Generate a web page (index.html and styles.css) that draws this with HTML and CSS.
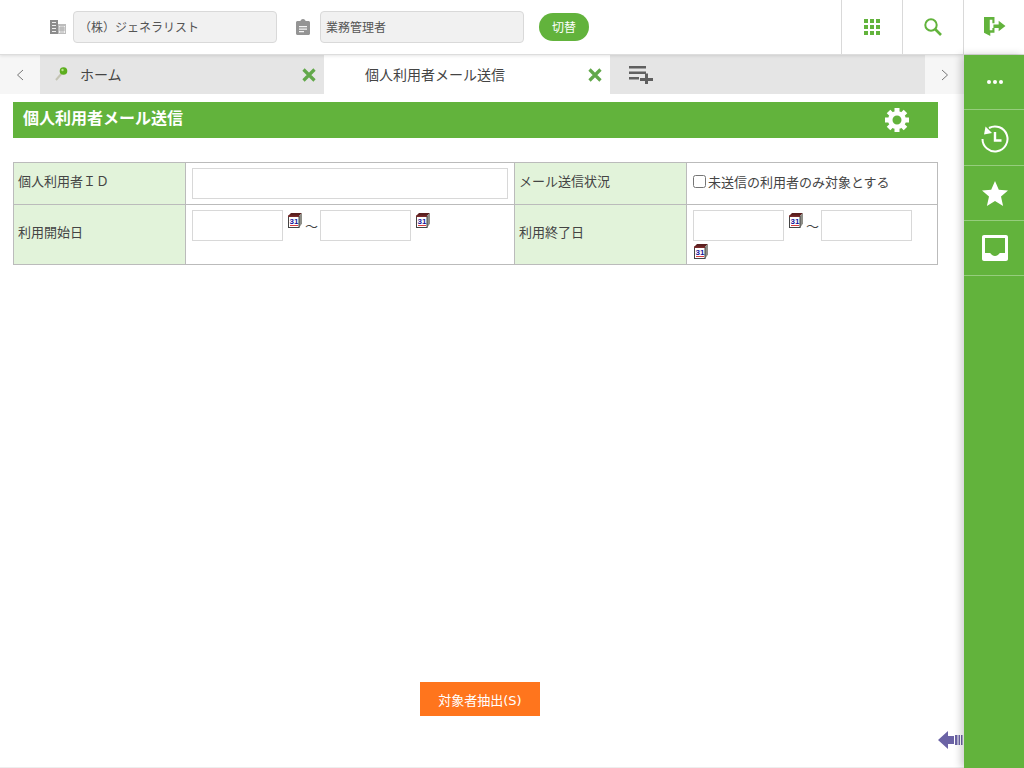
FILE: index.html
```html
<!DOCTYPE html>
<html lang="ja">
<head>
<meta charset="utf-8">
<title>個人利用者メール送信</title>
<link rel="stylesheet" href="styles.css">
</head>
<body>
<svg class="defs" width="0" height="0">
  <defs>
    <symbol id="cal" viewBox="0 0 14 15">
      <path d="M0 3 3 0h11l-3 3z" fill="#5a1f1f"/>
      <path d="M11 3l3-3v10.500L11 15z" fill="#8f8f88"/>
      <rect x=".5" y="3.500" width="10.500" height="11" fill="#fff" stroke="#444" stroke-width="1"/>
      <rect x="0" y="2.500" width="11" height="1.500" fill="#7a2a2a"/>
      <text x="1.500" y="10.500" class="cal-num">31</text>
      <rect x="2" y="12" width="8" height="1" fill="#d84040"/>
    </symbol>
  </defs>
</svg>
<header class="topbar">
  <div class="org">
    <svg class="org-icon" width="16" height="16" viewBox="0 0 16 16"><path d="M0 1h8v14H0z" fill="#8c8c8c"/><path d="M2 3h4v1H2zM2 6h4v1H2zM2 9h4v1H2zM2 12h4v1H2z" fill="#eee"/><path d="M8 5h8v10H8z" fill="#bdbdbd"/><path d="M9 7h6v7H9z" fill="#f0f0f0"/><path d="M9 9h6M9 11h6M11 7v7M13 7v7" stroke="#999" stroke-width=".7"/></svg>
    <div class="readonly name-co">（株）ジェネラリスト</div>
    <svg class="role-icon" width="14" height="16" viewBox="0 0 14 16"><path d="M1.500 2H4.500C4.500 1 5.500 0 7 0s2.500 1 2.500 2h3c.8 0 1.500.7 1.500 1.500v11c0 .8-.7 1.500-1.500 1.500h-11C.7 16 0 15.300 0 14.500v-11C0 2.700.7 2 1.500 2z" fill="#949494"/><path d="M3 7h8v1.200H3zM3 9.500h8v1.200H3zM3 12h5v1.200H3z" fill="#f4f4f4"/></svg>
    <div class="readonly name-role">業務管理者</div>
    <button class="switch" type="button">切替</button>
  </div>
  <nav class="top-actions">
    <div class="top-action">
      <svg width="16" height="16" viewBox="0 0 16 16" fill="#62b33c"><path d="M0 0h4v4H0zM6 0h4v4H6zM12 0h4v4h-4zM0 6h4v4H0zM6 6h4v4H6zM12 6h4v4h-4zM0 12h4v4H0zM6 12h4v4H6zM12 12h4v4h-4z"/></svg>
    </div>
    <div class="top-action">
      <svg width="18" height="18" viewBox="0 0 18 18" fill="none" stroke="#62b33c"><circle cx="7" cy="7" r="5.700" stroke-width="2"/><path d="M11 11l6 6" stroke-width="2.600"/></svg>
    </div>
    <div class="top-action top-action-last">
      <svg width="22" height="19" viewBox="0 0 21 18" fill="#62b33c"><path d="M0 0h10v6H8V2.500H5.500v10H8v-2h2V15H6v3l-6-3z"/><path d="M9 7h5V3.500l6.500 5-6.500 5V10.500H9z"/></svg>
    </div>
  </nav>
</header>
<div class="body-row">
  <main class="content">
    <div class="tabs">
      <div class="tab-arrow"><svg width="8" height="12" viewBox="0 0 8 12" fill="none" stroke="#777" stroke-width="1"><path d="M7 1 1.500 6 7 11"/></svg></div>
      <div class="tab tab-home">
        <svg class="pin" width="14" height="15" viewBox="0 0 14 15"><path d="M7 7 1 14" stroke="#c4c4b4" stroke-width="2"/><circle cx="8.500" cy="5" r="3.800" fill="#5cae1e"/><circle cx="7.500" cy="4" r="1.200" fill="#b6e08a"/></svg>
        <span class="tab-label">ホーム</span>
        <svg class="x" width="14" height="14" viewBox="0 0 14 14"><path d="M1.500 1.500l11 11M12.500 1.500l-11 11" stroke="#62a84a" stroke-width="3.200"/></svg>
      </div>
      <div class="tab tab-active">
        <span class="tab-label">個人利用者メール送信</span>
        <svg class="x" width="14" height="14" viewBox="0 0 14 14"><path d="M1.500 1.500l11 11M12.500 1.500l-11 11" stroke="#62a84a" stroke-width="3.200"/></svg>
      </div>
      <div class="tab-rest">
        <svg width="24" height="18" viewBox="0 0 24 18" fill="#5f5f5f"><path d="M0 0h17v2.500H0zM0 5.500h17V8H0zM0 11h10v2.500H0zM16 7.500h3V12h5v3h-5v3h-3v-3h-5v-3h5z"/></svg>
      </div>
      <div class="tab-arrow"><svg width="8" height="12" viewBox="0 0 8 12" fill="none" stroke="#777" stroke-width="1"><path d="M1 1 6.500 6 1 11"/></svg></div>
    </div>
    <section class="page">
      <div class="title-bar">
        <h1 class="title">個人利用者メール送信</h1>
        <svg class="gear" width="24" height="24" viewBox="-12 -12 24 24" fill="none" stroke="#fff">
          <circle r="6.800" stroke-width="4.600"/>
          <path d="M-12 0H12" stroke-width="5" stroke-dasharray="4 16 4"/>
          <path d="M-12 0H12" stroke-width="5" stroke-dasharray="4 16 4" transform="rotate(45)"/>
          <path d="M-12 0H12" stroke-width="5" stroke-dasharray="4 16 4" transform="rotate(90)"/>
          <path d="M-12 0H12" stroke-width="5" stroke-dasharray="4 16 4" transform="rotate(135)"/>
        </svg>
      </div>
      <table class="form">
        <colgroup><col class="c1"><col class="c2"><col class="c3"><col class="c4"></colgroup>
        <tr class="r1">
          <th>個人利用者ＩＤ</th>
          <td><input class="field field-wide" type="text"></td>
          <th>メール送信状況</th>
          <td><label class="check"><input type="checkbox">未送信の利用者のみ対象とする</label></td>
        </tr>
        <tr class="r2">
          <th>利用開始日</th>
          <td>
            <div class="range">
              <input class="field field-date" type="text"><svg class="cal"><use href="#cal"/></svg><span class="tilde">～</span><input class="field field-date" type="text"><svg class="cal"><use href="#cal"/></svg>
            </div>
          </td>
          <th>利用終了日</th>
          <td>
            <div class="range">
              <input class="field field-date" type="text"><svg class="cal"><use href="#cal"/></svg><span class="tilde">～</span><input class="field field-date" type="text"><svg class="cal"><use href="#cal"/></svg>
            </div>
          </td>
        </tr>
      </table>
      <div class="actions">
        <button class="extract" type="button">対象者抽出(S)</button>
      </div>
    </section>
    <svg class="collapse" width="25" height="20" viewBox="0 0 25 20" fill="#6b63a5"><path d="M0 10 10 1v5h6v8h-6v5z"/><path d="M17 5h2.500v10H17zM20.500 5h1.500v10h-1.500zM23 5h1.500v10H23z"/></svg>
  </main>
  <aside class="side">
    <div class="side-item">
      <svg width="16" height="4" viewBox="0 0 16 4" fill="#fff"><circle cx="2" cy="2" r="2"/><circle cx="8" cy="2" r="2"/><circle cx="14" cy="2" r="2"/></svg>
    </div>
    <div class="side-item side-item-tall">
      <svg width="28" height="28" viewBox="0 0 28 28" fill="none" stroke="#fff"><path d="M8 3A12.500 12.500 0 1 1 1.500 14" stroke-width="2"/><path d="M4.500 1.500 11 8 3 9.500z" fill="#fff" stroke="none"/><path d="M14 7v8.500h6.500" stroke-width="2.400"/></svg>
    </div>
    <div class="side-item">
      <svg width="26" height="25" viewBox="0 0 26 25" fill="#fff"><path d="M13 0l3.800 8.700 9.200.8-7 6.100 2.100 9.400-8.100-5-8.100 5 2.100-9.400-7-6.100 9.200-.8z"/></svg>
    </div>
    <div class="side-item">
      <svg width="26" height="26" viewBox="0 0 26 26"><path fill="#fff" fill-rule="evenodd" d="M2 0h22c1.100 0 2 .9 2 2v22c0 1.100-.9 2-2 2H2c-1.100 0-2-.9-2-2V2C0 .9.900 0 2 0zM3 3v15h5c1 0 1.500 3 5 3s4-3 5-3h5V3z"/></svg>
    </div>
  </aside>
</div>
</body>
</html>
```
FILE: styles.css
```css
* { box-sizing: border-box; }
html, body { margin: 0; height: 768px; overflow: hidden; }
body {
  display: flex;
  flex-direction: column;
  background: #fff;
  color: #444;
  font-family: "Noto Sans CJK JP", "Noto Sans", sans-serif;
  font-size: 13px;
}
.defs { position: absolute; }
.cal-num { font: bold 8px "Liberation Sans", sans-serif; fill: #16169a; }

.topbar {
  flex: none;
  height: 55px;
  display: flex;
  justify-content: space-between;
  border-bottom: 1px solid #ddd;
  box-shadow: 0 1px 3px rgba(0,0,0,.1);
  position: relative;
  z-index: 3;
}
.org {
  display: flex;
  align-items: center;
  padding-left: 50px;
}
.org-icon { margin-right: 7px; }
.readonly {
  width: 204px;
  height: 32px;
  line-height: 29px;
  background: #f1f1f1;
  border: 1px solid #d9d9d9;
  border-radius: 4px;
  color: #555;
  font-size: 12px;
}
.name-co { padding-left: 5px; }
.name-role { padding-left: 5px; }
.role-icon { margin: 0 10px 0 19px; }
.switch {
  margin-left: 15px;
  width: 50px;
  height: 28px;
  border: 0;
  border-radius: 14px;
  background: #62b33c;
  color: #fff;
  font: inherit;
  font-size: 12px;
  padding: 0 0 2px;
}
.top-actions { display: flex; }
.top-action {
  width: 61px;
  display: flex;
  align-items: center;
  justify-content: center;
  border-left: 1px solid #d9d9d9;
  padding-right: 1px;
}
.top-action-last { padding: 0 0 1px 1px; }

.body-row { flex: 1; display: flex; min-height: 0; }
.content {
  flex: 1;
  min-width: 0;
  position: relative;
  display: flex;
  flex-direction: column;
  border-bottom: 1px solid #eee;
}
.tabs { flex: none; height: 39px; display: flex; background: #e5e5e5; }
.tab-arrow {
  width: 40px;
  background: #f6f6f6;
  display: flex;
  align-items: center;
  justify-content: center;
}
.tab-arrow:last-child { width: 39px; }
.tab {
  display: flex;
  align-items: center;
  position: relative;
  font-size: 14px;
  padding-bottom: 2px;
}
.tab-home { width: 284px; padding-left: 15px; }
.pin { margin-right: 11px; }
.tab-active { width: 286px; background: #fff; padding-left: 41px; }
.x { position: absolute; right: 8px; top: 13px; }
.tab-rest { flex: 1; padding: 11px 0 0 19px; }

.page {
  flex: 1;
  display: flex;
  flex-direction: column;
  padding: 8px 26px 0 13px;
}
.title-bar {
  flex: none;
  height: 36px;
  background: #62b33c;
  display: flex;
  align-items: center;
  justify-content: space-between;
  padding: 0 29px 0 10px;
}
.title { margin: 0 0 7px; font-size: 16px; font-weight: 700; color: #fff; }
.form {
  margin-top: 24px;
  width: 924px;
  table-layout: fixed;
  border-collapse: collapse;
  font-size: 13px;
}
.c1, .c3 { width: 172px; }
.c2 { width: 329px; }
.c4 { width: 251px; }
.form th, .form td { border: 1px solid #bbb; padding: 5px 6px 0; vertical-align: top; }
.form th {
  background: #e2f3da;
  font-weight: 400;
  text-align: left;
  vertical-align: middle;
  padding: 0 4px 7px;
}
.r1 { height: 42px; }
.r2 { height: 60px; }
.range { display: flex; flex-wrap: wrap; align-items: flex-start; }
.field {
  height: 31px;
  border: 1px solid #d8d8d8;
  background: #fff;
  padding: 0;
  margin: 0;
  vertical-align: top;
}
.field-wide { width: 316px; }
.field-date { width: 91px; margin-right: 4px; }
.cal { width: 14px; height: 15px; margin: 3px 1px 0 1px; flex: none; }
.tilde { width: 13px; margin: 6px 2px 0 2px; font-size: 13px; line-height: 20px; }
.check { display: inline-block; font-size: 13px; line-height: 24px; margin-top: 2px; }
.check input { margin: 0 2px 0 0; width: 13px; height: 13px; vertical-align: -1px; }

.actions { margin-top: auto; padding-bottom: 51px; display: flex; justify-content: center; }
.extract {
  width: 120px;
  height: 34px;
  margin-left: 9px;
  border: 0;
  padding: 0;
  background: #ff751d;
  color: #fff;
  font: inherit;
  font-family: "DejaVu Sans", "Noto Sans CJK JP", sans-serif;
  font-size: 13px;
}
.collapse { position: absolute; right: 1px; top: 675px; }

.side {
  flex: none;
  width: 60px;
  background: #62b33c;
  box-shadow: -3px 0 8px rgba(0,0,0,.2);
  position: relative;
  z-index: 4;
}
.side-item {
  height: 55px;
  display: flex;
  align-items: center;
  justify-content: center;
  border-bottom: 1px solid #96cd7d;
  padding-left: 2px;
}
.side-item-tall { height: 56px; padding-top: 2px; }
```
